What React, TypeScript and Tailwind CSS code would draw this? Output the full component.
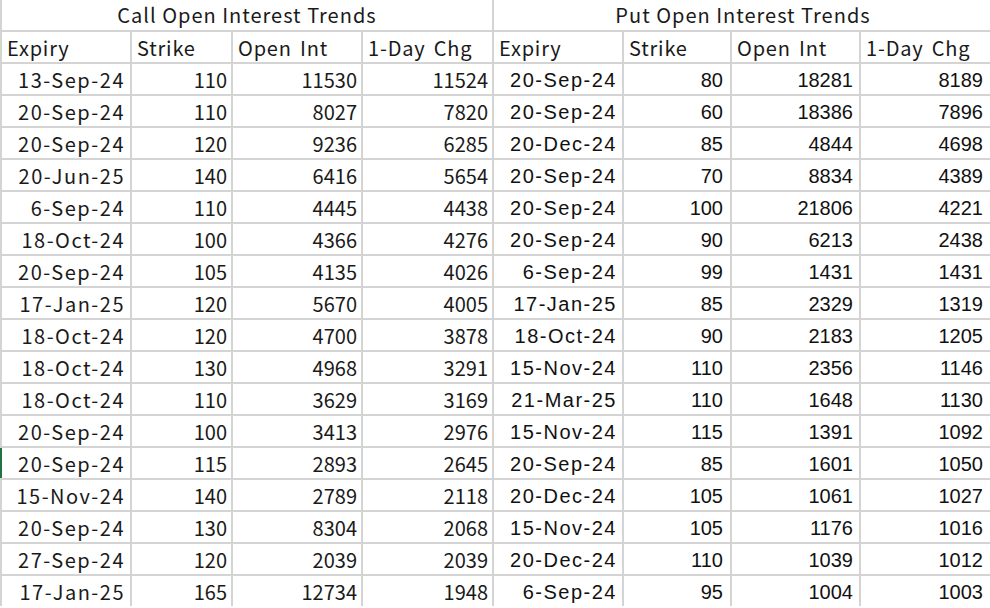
const calls = [
  ["13-Sep-24", 110, 11530, 11524],
  ["20-Sep-24", 110, 8027, 7820],
  ["20-Sep-24", 120, 9236, 6285],
  ["20-Jun-25", 140, 6416, 5654],
  ["6-Sep-24", 110, 4445, 4438],
  ["18-Oct-24", 100, 4366, 4276],
  ["20-Sep-24", 105, 4135, 4026],
  ["17-Jan-25", 120, 5670, 4005],
  ["18-Oct-24", 120, 4700, 3878],
  ["18-Oct-24", 130, 4968, 3291],
  ["18-Oct-24", 110, 3629, 3169],
  ["20-Sep-24", 100, 3413, 2976],
  ["20-Sep-24", 115, 2893, 2645],
  ["15-Nov-24", 140, 2789, 2118],
  ["20-Sep-24", 130, 8304, 2068],
  ["27-Sep-24", 120, 2039, 2039],
  ["17-Jan-25", 165, 12734, 1948],
] as const;

const puts = [
  ["20-Sep-24", 80, 18281, 8189],
  ["20-Sep-24", 60, 18386, 7896],
  ["20-Dec-24", 85, 4844, 4698],
  ["20-Sep-24", 70, 8834, 4389],
  ["20-Sep-24", 100, 21806, 4221],
  ["20-Sep-24", 90, 6213, 2438],
  ["6-Sep-24", 99, 1431, 1431],
  ["17-Jan-25", 85, 2329, 1319],
  ["18-Oct-24", 90, 2183, 1205],
  ["15-Nov-24", 110, 2356, 1146],
  ["21-Mar-25", 110, 1648, 1130],
  ["15-Nov-24", 115, 1391, 1092],
  ["20-Sep-24", 85, 1601, 1050],
  ["20-Dec-24", 105, 1061, 1027],
  ["15-Nov-24", 105, 1176, 1016],
  ["20-Dec-24", 110, 1039, 1012],
  ["6-Sep-24", 95, 1004, 1003],
] as const;

const headers = ["Expiry", "Strike", "Open Int", "1-Day Chg"];

// left side is the rounder CJK-ish face, right side data is arial-like
const cjk = "font-['Noto_Sans_CJK_SC','Noto_Sans',sans-serif] text-[#1a1a1a]";
const arial = "font-['Liberation_Sans','Noto_Sans_CJK_SC',sans-serif] text-[#111]";

const Num = ({ v, font, pr = "pr-[4px]" }: { v: number | string; font: string; pr?: string }) => (
  <div className={`bg-white flex items-center justify-end pt-[2px] ${pr} ${font}`}>{v}</div>
);

const DateCell = ({ v, font, mark }: { v: string; font: string; mark?: boolean }) => (
  <div
    className={`bg-white flex items-center justify-end pr-[5px] pt-[2px] tracking-[1.5px] ${font} ${
      mark ? "shadow-[-2px_0_0_#217346]" : ""
    }`}
  >
    {v}
  </div>
);

export default function App() {
  return (
    <div className="w-[990px] h-[608px] overflow-hidden bg-white text-[20px]">
      <div className="w-[992px] grid grid-cols-[128px_99px_128px_129px_128px_106px_127px_131px] auto-rows-[30px] gap-[2px] bg-[#d4d4d4] pl-[2px] leading-none">
        <div className={`col-span-4 bg-white flex items-center justify-center tracking-[1px] ${cjk}`}>
          Call Open Interest Trends
        </div>
        <div className={`col-span-4 bg-white flex items-center justify-center tracking-[1px] ${cjk}`}>
          Put Open Interest Trends
        </div>

        {[...headers, ...headers].map((h, i) => (
          <div
            key={i}
            className={`bg-white flex items-center pl-[5px] pt-[2px] tracking-[0.8px] [word-spacing:3px] ${cjk}`}
          >
            {h}
          </div>
        ))}

        {calls.map((c, i) => {
          const p = puts[i];
          return [
            <DateCell key={`a${i}`} v={c[0]} font={cjk} mark={i === 12} />,
            <Num key={`b${i}`} v={c[1]} font={cjk} />,
            <Num key={`c${i}`} v={c[2]} font={cjk} />,
            <Num key={`d${i}`} v={c[3]} font={cjk} />,
            <DateCell key={`e${i}`} v={p[0]} font={arial} />,
            <Num key={`f${i}`} v={p[1]} font={arial} pr="pr-[7px]" />,
            <Num key={`g${i}`} v={p[2]} font={arial} pr="pr-[6px]" />,
            <Num key={`h${i}`} v={p[3]} font={arial} pr="pr-[9px]" />,
          ];
        })}
      </div>
    </div>
  );
}
